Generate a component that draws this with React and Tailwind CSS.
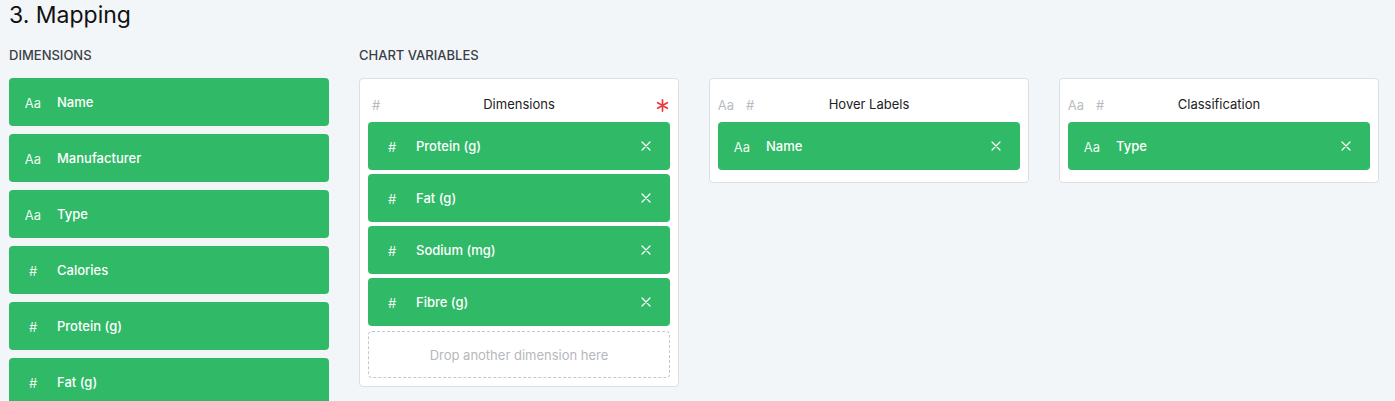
import React from "react";

const GREEN = "bg-[#30b966]";

function TypeIcon({ type, className = "" }) {
  return (
    <span className={`w-6 flex justify-center text-[13px] leading-none ${className}`}>
      {type === "text" ? "Aa" : "#"}
    </span>
  );
}

function CloseIcon() {
  return (
    <span className="w-6 flex justify-center">
      <svg width="10" height="10" viewBox="0 0 10 10" fill="none" stroke="white" strokeWidth="1.2" strokeLinecap="round">
        <path d="M1 1 L9 9 M9 1 L1 9" />
      </svg>
    </span>
  );
}

function Asterisk() {
  return (
    <span className="w-6 flex justify-center">
      <svg width="13" height="13" viewBox="0 0 14 14" fill="none" stroke="#e5383b" strokeWidth="1.8" strokeLinecap="round">
        <path d="M7 1 L7 13 M1.8 4 L12.2 10 M1.8 10 L12.2 4" />
      </svg>
    </span>
  );
}

function Pill({ type, label, closable }) {
  return (
    <div className={`${GREEN} rounded h-12 flex items-center pl-3 pr-3 text-white`}>
      <TypeIcon type={type} className="text-white/95 pt-[2px]" />
      <span className="ml-3 text-[13px] font-medium flex-1 pt-[2px]">{label}</span>
      {closable && <CloseIcon />}
    </div>
  );
}

function VarCard({ title, icons, required, items, drop }) {
  return (
    <div className="bg-white border border-[#dcdfe3] rounded flex flex-col">
      <div className="h-[43px] pt-[16px] px-[4px] flex items-start relative">
        <div className="flex items-center h-5 text-[#b8bcc0]">
          {icons.map((t) => (
            <TypeIcon key={t} type={t} />
          ))}
        </div>
        <div className="absolute left-0 right-0 top-[16px] h-5 flex justify-center items-center text-[13px] text-[#222]">
          {title}
        </div>
        <div className="flex-1" />
        {required && (
          <div className="h-5 flex items-center">
            <Asterisk />
          </div>
        )}
      </div>
      <div className={`px-2 flex flex-col gap-1 ${drop ? "pb-2" : "pb-3"}`}>
        {items.map((it) => (
          <Pill key={it.label} type={it.type} label={it.label} closable />
        ))}
        {drop && (
          <div className="mt-[1px] h-[47px] pt-[2px] border border-dashed border-[#c4c7cb] rounded flex items-center justify-center text-[13px] text-[#b5b8bc]">
            Drop another dimension here
          </div>
        )}
      </div>
    </div>
  );
}

export default function App() {
  const dims = [
    { type: "text", label: "Name" },
    { type: "text", label: "Manufacturer" },
    { type: "text", label: "Type" },
    { type: "num", label: "Calories" },
    { type: "num", label: "Protein (g)" },
    { type: "num", label: "Fat (g)" },
  ];
  return (
    <div
      className="w-[1395px] h-[401px] overflow-hidden bg-[#f3f6f9] pl-[9px]"
      style={{ fontFamily: "Inter, 'Noto Sans', sans-serif" }}
    >
      <h1 className="text-[23px] leading-8 text-[#111] -mt-[1px]">3. Mapping</h1>
      <div className="grid grid-cols-[320px_320px_320px_320px] gap-x-[30px] mt-[15px]">
        <div className="flex flex-col">
          <div className="h-4 text-[13px] leading-4 font-medium text-[#3a3f47] pt-px">DIMENSIONS</div>
          <div className="mt-4 flex flex-col gap-2">
            {dims.map((d) => (
              <Pill key={d.label} type={d.type} label={d.label} />
            ))}
          </div>
        </div>
        <div className="col-span-3 flex flex-col">
          <div className="h-4 text-[13px] leading-4 font-medium text-[#3a3f47] pt-px">CHART VARIABLES</div>
          <div className="mt-4 grid grid-cols-[320px_320px_320px] gap-x-[30px] items-start">
            <VarCard
              title="Dimensions"
              icons={["num"]}
              required
              drop
              items={[
                { type: "num", label: "Protein (g)" },
                { type: "num", label: "Fat (g)" },
                { type: "num", label: "Sodium (mg)" },
                { type: "num", label: "Fibre (g)" },
              ]}
            />
            <VarCard title="Hover Labels" icons={["text", "num"]} items={[{ type: "text", label: "Name" }]} />
            <VarCard title="Classification" icons={["text", "num"]} items={[{ type: "text", label: "Type" }]} />
          </div>
        </div>
      </div>
    </div>
  );
}
